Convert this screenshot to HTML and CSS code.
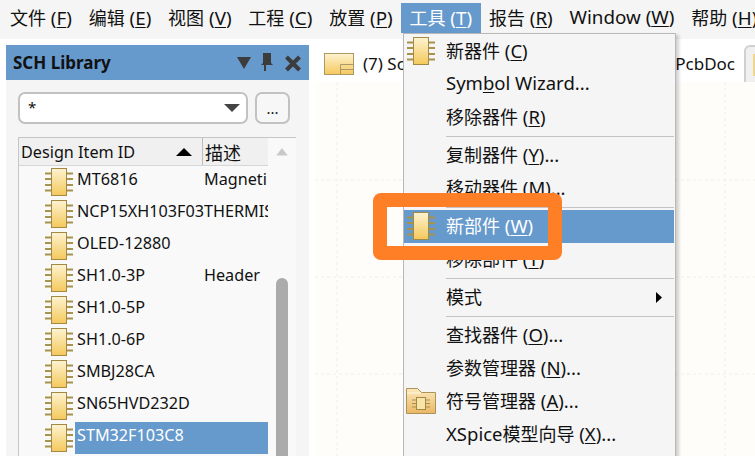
FILE: index.html
```html
<!DOCTYPE html>
<html>
  <head>
    <meta charset="utf-8">
    <title>SCH Library</title>
    <link rel="stylesheet" href="styles.css">
  </head>
  <body>
    <svg class="defs" width="0" height="0">
      <defs>
        <linearGradient id="chip-fill" x1="0" y1="0" x2="0" y2="1">
          <stop offset="0" stop-color="#fdf3d0"/>
          <stop offset="1" stop-color="#f5c85c"/>
        </linearGradient>
        <linearGradient id="folder-fill" x1="0" y1="0" x2="0" y2="1">
          <stop offset="0" stop-color="#fbe9bd"/>
          <stop offset="1" stop-color="#eab765"/>
        </linearGradient>
        <symbol id="chip" viewBox="0 0 28 28">
          <path d="M0 5.500h28M0 11h28M0 17h28M0 22.500h28" stroke="#a8924c" stroke-width="2" fill="none"/>
          <rect x="6.500" y="0.500" width="15" height="27" fill="url(#chip-fill)" stroke="#a08a45"/>
        </symbol>
      </defs>
    </svg>

    <nav class="menubar">
      <a class="menubar__item"><span class="zh">文件</span> (<u>F</u>)</a>
      <a class="menubar__item"><span class="zh">编辑</span> (<u>E</u>)</a>
      <a class="menubar__item"><span class="zh">视图</span> (<u>V</u>)</a>
      <a class="menubar__item"><span class="zh">工程</span> (<u>C</u>)</a>
      <a class="menubar__item"><span class="zh">放置</span> (<u>P</u>)</a>
      <a class="menubar__item menubar__item--open"><span class="zh">工具</span> (<u>T</u>)</a>
      <a class="menubar__item"><span class="zh">报告</span> (<u>R</u>)</a>
      <a class="menubar__item">Window (<u>W</u>)</a>
      <a class="menubar__item"><span class="zh">帮助</span> (<u>H</u>)</a>
    </nav>

    <div class="workspace">
      <aside class="panel">
        <header class="panel__head">
          <span class="panel__title">SCH Library</span>
          <svg class="panel__tools" width="64" height="20" viewBox="0 0 64 20">
            <path d="M0 4h14l-7 12z" fill="#3c3c3c"/>
            <path d="M26 0h8v10l2 2h-7v6h-2v-6h-3l2-2z" fill="#3c3c3c"/>
            <path d="M49.500 4l13 13M62.500 4l-13 13" stroke="#3c3c3c" stroke-width="4"/>
          </svg>
        </header>
        <div class="panel__body">
          <div class="filter">
            <div class="filter__combo">
              <span class="filter__value">*</span>
              <svg width="16" height="8" viewBox="0 0 16 8"><path d="M0 0h16l-8 8z" fill="#444"/></svg>
            </div>
            <div class="filter__more">...</div>
          </div>

          <div class="table">
            <div class="table__head">
              <div class="table__col table__col--id">
                <span>Design Item ID</span>
                <svg width="16" height="8" viewBox="0 0 16 8"><path d="M8 0l8 8H0z" fill="#000"/></svg>
              </div>
              <div class="table__col table__col--desc"><span class="zh">描述</span></div>
            </div>
            <div class="table__main">
              <div class="table__rows">
                <div class="row"><svg class="row__icon"><use href="#chip"/></svg><span class="row__id">MT6816</span><span class="row__desc">Magneti</span></div>
                <div class="row"><svg class="row__icon"><use href="#chip"/></svg><span class="row__id">NCP15XH103F03</span><span class="row__desc">THERMIS</span></div>
                <div class="row"><svg class="row__icon"><use href="#chip"/></svg><span class="row__id">OLED-12880</span><span class="row__desc"></span></div>
                <div class="row"><svg class="row__icon"><use href="#chip"/></svg><span class="row__id">SH1.0-3P</span><span class="row__desc">Header</span></div>
                <div class="row"><svg class="row__icon"><use href="#chip"/></svg><span class="row__id">SH1.0-5P</span><span class="row__desc"></span></div>
                <div class="row"><svg class="row__icon"><use href="#chip"/></svg><span class="row__id">SH1.0-6P</span><span class="row__desc"></span></div>
                <div class="row"><svg class="row__icon"><use href="#chip"/></svg><span class="row__id">SMBJ28CA</span><span class="row__desc"></span></div>
                <div class="row"><svg class="row__icon"><use href="#chip"/></svg><span class="row__id">SN65HVD232D</span><span class="row__desc"></span></div>
                <div class="row row--selected"><svg class="row__icon"><use href="#chip"/></svg><span class="row__id">STM32F103C8</span><span class="row__desc"></span></div>
              </div>
            </div>
            <div class="scroll">
              <svg class="scroll__up" width="12" height="8" viewBox="0 0 12 8"><path d="M6 0l6 8H0z" fill="#c9c9c9"/></svg>
              <div class="scroll__thumb"></div>
            </div>
          </div>
        </div>
      </aside>

      <section class="docs">
        <div class="tabs">
          <div class="tab tab--first">
            <svg width="30" height="22" viewBox="0 0 30 22">
              <rect x="0.500" y="0.500" width="29" height="21" fill="url(#chip-fill)" stroke="#ab9a66"/>
              <path d="M16.500 21.500v-10h13M16.500 16.500h13" fill="none" stroke="#ab9a66"/>
            </svg>
            <span>(7) Schematic1.SchDoc</span>
          </div>
          <div class="tab tab--second">PCB1.PcbDoc</div>
          <div class="tab tab--third"><span class="tab__sliver"></span></div>
        </div>
        <div class="canvas">
          <svg class="canvas__grid" width="440" height="374">
            <path d="M22 0v374M119 0v374M216 0v374M313 0v374M410 0v374M0 98h440M0 195h440M0 292h440" stroke="#f1eee8" stroke-dasharray="3 3" fill="none"/>
          </svg>
        </div>
      </section>
    </div>

    <div class="menu">
      <div class="menu__item">
        <svg class="menu__icon"><use href="#chip"/></svg>
        <span class="zh">新器件</span> (<u>C</u>)
      </div>
      <div class="menu__item">Sym<u>b</u>ol Wizard...</div>
      <div class="menu__item"><span class="zh">移除器件</span> (<u>R</u>)</div>
      <div class="menu__sep"></div>
      <div class="menu__item"><span class="zh">复制器件</span> (<u>Y</u>)...</div>
      <div class="menu__item"><span class="zh">移动器件</span> (<u>M</u>)...</div>
      <div class="menu__sep"></div>
      <div class="menu__item menu__item--active">
        <svg class="menu__icon"><use href="#chip"/></svg>
        <span class="zh">新部件</span> (<u>W</u>)
      </div>
      <div class="menu__item"><span class="zh">移除部件</span> (<u>T</u>)</div>
      <div class="menu__sep"></div>
      <div class="menu__item">
        <span class="zh">模式</span>
        <svg class="menu__arrow" width="6" height="11" viewBox="0 0 6 11"><path d="M0 0l6 5.500L0 11z" fill="#000"/></svg>
      </div>
      <div class="menu__sep"></div>
      <div class="menu__item"><span class="zh">查找器件</span> (<u>O</u>)...</div>
      <div class="menu__item"><span class="zh">参数管理器</span> (<u>N</u>)...</div>
      <div class="menu__item">
        <svg class="menu__icon menu__icon--folder" width="30" height="26" viewBox="0 0 30 26">
          <path d="M0.500 25.500V0.500h11l4 4h14v21z" fill="url(#folder-fill)" stroke="#ac9359"/>
          <path d="M1 5h14" stroke="#fff7e2"/>
          <path d="M6 12h18M6 15.500h18M6 19h18" stroke="#a8924c"/>
          <rect x="10.500" y="9.500" width="9" height="12" fill="#f9e3a8" stroke="#a08a45"/>
        </svg>
        <span class="zh">符号管理器</span> (<u>A</u>)...
      </div>
      <div class="menu__item">XSpice<span class="zh">模型向导</span> (<u>X</u>)...</div>
    </div>

    <div class="callout"></div>
  </body>
</html>
```

FILE: styles.css
```css
html, body {
  margin: 0;
  height: 100%;
}

body {
  position: relative;
  display: flex;
  flex-direction: column;
  width: 755px;
  height: 456px;
  overflow: hidden;
  background: #ffffff;
  color: #111111;
  font-family: "Noto Sans", "Noto Sans CJK SC", sans-serif;
  font-size: 16.2px;
}

.defs {
  position: absolute;
}

.zh {
  font-family: "Noto Sans CJK SC", sans-serif;
  font-size: 18px;
}

u {
  text-underline-offset: 2px;
  text-decoration-thickness: 1px;
}

/* menu bar */
.menubar {
  display: flex;
  align-items: flex-start;
  flex: none;
  height: 39px;
  padding: 3px 0 0 1.600px;
  box-sizing: border-box;
  background: #f5f5f5;
  overflow: hidden;
}

.menubar__item {
  flex: none;
  height: 30px;
  padding: 0 8.400px;
  font-size: 18.800px;
  line-height: 28px;
  white-space: nowrap;
}

.menubar__item--open {
  background: #6699cc;
  color: #ffffff;
}

/* left panel */
.workspace {
  display: flex;
  flex: 1;
  min-height: 0;
}

.panel {
  flex: none;
  width: 303px;
  margin: 6px 6px 0 6px;
  background: #f5f5f5;
}

.panel__head {
  display: flex;
  align-items: center;
  justify-content: space-between;
  height: 35px;
  padding: 0 8px 0 7px;
  background: #6699cc;
}

.panel__title {
  font-size: 17px;
  font-weight: 700;
}

.panel__body {
  padding: 12px 13px 0 12px;
}

.filter {
  display: flex;
  gap: 7px;
  height: 32px;
}

.filter__combo {
  display: flex;
  align-items: center;
  justify-content: space-between;
  box-sizing: border-box;
  width: 230px;
  padding: 0 6px 0 8px;
  background: #ffffff;
  border: 2px solid #c2c2c2;
  border-radius: 7px;
}

.filter__value {
  font-size: 15px;
  line-height: 24px;
  margin-top: -3px;
}

.filter__more {
  box-sizing: border-box;
  width: 35px;
  background: #f7f7f7;
  border: 2px solid #c2c2c2;
  border-radius: 7px;
  text-align: center;
  font-size: 15px;
  line-height: 28px;
}

.table {
  display: grid;
  grid-template-columns: 249px 28px;
  grid-template-rows: 28px 1fr;
  margin-top: 13px;
  height: 330px;
  background: #f9f9f9;
  border: 1px solid #c6c6c6;
  border-bottom: 0;
}

.table__head {
  display: flex;
  background: #f0f0f0;
  border-bottom: 1px solid #d6d6d6;
}

.table__col {
  display: flex;
  align-items: center;
  box-sizing: border-box;
}

.table__col--id {
  justify-content: space-between;
  width: 184px;
  padding: 0 10px 0 2px;
  border-right: 1px solid #bdbdbd;
}

.table__col--desc {
  padding-left: 2px;
}

.table__main {
  grid-column: 1;
  grid-row: 2;
  min-width: 0;
}

.row {
  display: flex;
  height: 32px;
  padding-left: 26px;
  line-height: 26px;
}

.row__icon {
  flex: none;
  width: 28px;
  height: 28px;
  margin-top: 2px;
}

.row__id {
  flex: none;
  box-sizing: border-box;
  width: 129px;
  margin-left: 2px;
  padding-left: 2px;
  white-space: nowrap;
}

.row__desc {
  flex: 1;
  min-width: 0;
  overflow: hidden;
  white-space: nowrap;
}

.row--selected .row__id,
.row--selected .row__desc {
  background: #6699cc;
  color: #ffffff;
}

.scroll {
  grid-column: 2;
  grid-row: 1 / span 2;
  display: flex;
  flex-direction: column;
  align-items: center;
  background: #f9f9f9;
}

.scroll__up {
  margin-top: 10px;
}

.scroll__thumb {
  width: 12px;
  height: 200px;
  margin-top: 122px;
  background: #ababab;
  border-radius: 6px;
}

/* documents */
.docs {
  display: flex;
  flex-direction: column;
  flex: 1;
  min-width: 0;
}

.tabs {
  display: flex;
  align-items: flex-end;
  flex: none;
  height: 43px;
  font-size: 17px;
  white-space: nowrap;
}

.tab {
  display: flex;
  align-items: center;
}

.tab--first {
  flex: none;
  gap: 9px;
  box-sizing: border-box;
  width: 250px;
  height: 37px;
  padding-left: 9px;
  overflow: hidden;
}

.tab--second {
  flex: none;
  justify-content: flex-end;
  width: 170px;
  height: 37px;
}

.tab--third {
  flex: none;
  box-sizing: border-box;
  width: 40px;
  height: 37px;
  margin-left: 9px;
  padding-left: 7px;
  background: #f0f0f0;
  border: 2px solid #d0d0d0;
  border-bottom: 0;
  border-radius: 6px 0 0 0;
}

.tab__sliver {
  width: 4px;
  height: 22px;
  background: #f0d58c;
}

.canvas {
  flex: 1;
  background: #fffdf9;
}

.canvas__grid {
  display: block;
}

/* tools dropdown */
.menu {
  position: absolute;
  left: 403px;
  top: 33px;
  width: 273px;
  height: 440px;
  box-sizing: border-box;
  padding: 1px 1px 1px 0;
  background: #f5f5f5;
  border: 1px solid #b8b8b8;
  box-shadow: 3px 2px 3px rgba(0, 0, 0, 0.18);
  font-size: 18.500px;
}

.menu__item {
  position: relative;
  height: 33px;
  padding-left: 42px;
  line-height: 30px;
  white-space: nowrap;
}

.menu__item--active {
  background: #6699cc;
  color: #ffffff;
}

.menu__icon {
  position: absolute;
  left: 3px;
  top: 2px;
  width: 28px;
  height: 28px;
}

.menu__icon--folder {
  width: 30px;
  height: 26px;
  top: 3px;
  left: 2px;
}

.menu__arrow {
  position: absolute;
  right: 12px;
  top: 11px;
}

.menu__sep {
  height: 1px;
  margin: 2px 0 2px 42px;
  background: #c4c4c4;
}

/* orange annotation box */
.callout {
  position: absolute;
  left: 373px;
  top: 193px;
  width: 189px;
  height: 67px;
  box-sizing: border-box;
  border: 14px solid #ff7f27;
  border-radius: 8px;
}
```
